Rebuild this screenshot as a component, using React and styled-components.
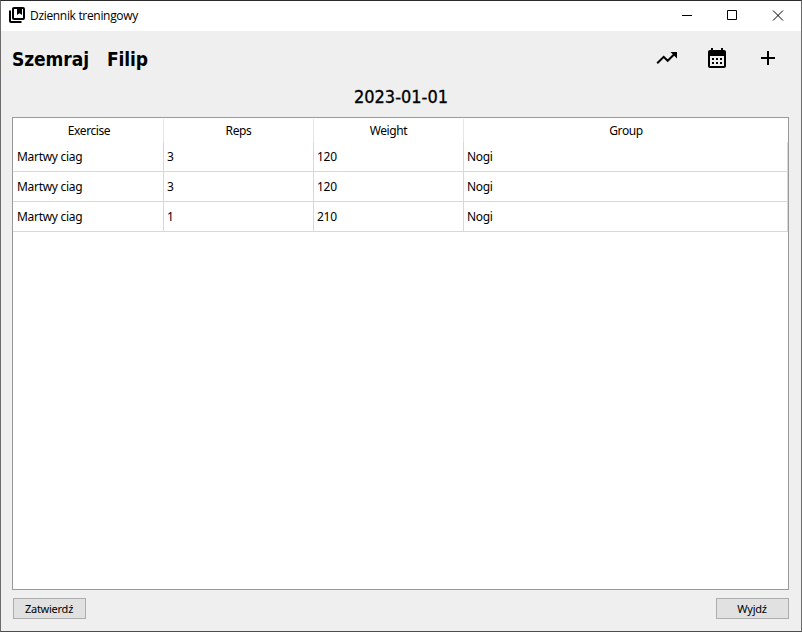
import React from "react";
import styled, { createGlobalStyle } from "styled-components";
import { MdCalendarMonth, MdAdd } from "react-icons/md";

const GlobalStyle = createGlobalStyle`
  * { box-sizing: border-box; }
  body { margin: 0; background: #efefef; overflow: hidden; }
`;

const Window = styled.div`
  display: flex;
  flex-direction: column;
  width: 802px;
  height: 632px;
  background: #efefef;
  border: 1px solid #6b6b6b;
  border-top-color: #2b2b2b;
  border-bottom-color: #4c4c4c;
  color: #000;
  font: 12px/16px "Noto Sans", "Open Sans", sans-serif;
  white-space: nowrap;
`;

const TitleBar = styled.header`
  display: flex;
  align-items: center;
  height: 30px;
  flex: none;
  padding-left: 8px;
  background: #fff;
`;

const AppIcon = styled.svg`
  width: 16px;
  height: 16px;
  margin: 0 5px 2px 0;
  fill: none;
  stroke: #000;
  stroke-width: 2;
`;

const WindowTitle = styled.span`
  flex: 1;
  font-family: "Open Sans", sans-serif;
  font-size: 12px;
  letter-spacing: -0.32px;
`;

const WindowButtons = styled.svg`
  width: 138px;
  height: 30px;
  fill: none;
  stroke: #000;
`;

const Toolbar = styled.div`
  display: flex;
  align-items: center;
  flex: none;
  height: 54px;
  padding: 0 21px 0 11px;
`;

const Name = styled.h1`
  margin: 2px 18px 0 0;
  font: bold 19px/24px "DejaVu Sans Condensed", "DejaVu Sans", sans-serif;
  font-stretch: semi-condensed;
  letter-spacing: -0.08px;
`;

const Actions = styled.div`
  display: flex;
  align-items: center;
  margin-left: auto;
  gap: 27px;

  svg { width: 24px; height: 24px; }
`;

const TrendIcon = styled.svg`
  margin-right: -1px;
  fill: none;
  stroke: #000;
  stroke-width: 2;
`;

const DateHeading = styled.h2`
  margin: 0;
  flex: none;
  height: 32px;
  text-align: center;
  font: 400 18px/23px "DejaVu Sans Condensed", "DejaVu Sans", sans-serif;
  font-stretch: semi-condensed;
  -webkit-text-stroke: 0.3px #000;
`;

const Table = styled.section`
  flex: 1;
  margin: 0 12px 0 11px;
  border: 1px solid #9a9a9a;
  background: #fff;
`;

const Row = styled.div`
  display: grid;
  grid-template-columns: 151px 150px 150px 1fr;
  height: 30px;
`;

const HeaderRow = styled(Row)`
  height: 24px;
  padding-top: 1px;
`;

const HeaderCell = styled.div`
  border-right: 1px solid #e5e5e5;
  text-align: center;
  line-height: 23px;
  letter-spacing: -0.4px;

  &:first-child { padding-left: 2px; }
  &:last-child { border-right: 0; }
`;

const Cell = styled.div`
  border-right: 1px solid #d8d8d8;
  border-bottom: 1px solid #d8d8d8;
  padding-top: 1px;
  padding-left: ${(p) => (p.$first ? "4px" : "3px")};
  line-height: 28px;
  letter-spacing: -0.3px;
`;

const Footer = styled.footer`
  display: flex;
  justify-content: space-between;
  flex: none;
  height: 41px;
  padding: 8px 12px 0;
`;

const Button = styled.button`
  width: 73px;
  height: 21px;
  padding: 0 1px 0 0;
  border: 1px solid #adadad;
  background: #e1e1e1;
  color: #000;
  font: 11px/19px "Noto Sans", sans-serif;
  letter-spacing: -0.25px;
`;

const headers = ["Exercise", "Reps", "Weight", "Group"];
const rows = [
  ["Martwy ciag", "3", "120", "Nogi"],
  ["Martwy ciag", "3", "120", "Nogi"],
  ["Martwy ciag", "1", "210", "Nogi"],
];

export default function App() {
  return (
    <>
      <GlobalStyle />
      <Window>
        <TitleBar>
          <AppIcon viewBox="0 0 16 16">
            <rect x="4" y="1" width="11" height="11" rx="1" />
            <path d="M1 3.5V14q0 1 1 1h10.5" />
            <path d="M8 1h5v7l-2.5-1.8L8 8z" fill="#000" stroke="none" />
          </AppIcon>
          <WindowTitle>Dziennik treningowy</WindowTitle>
          <WindowButtons viewBox="0 0 138 30">
            <path d="M19 14.5h10M64.5 9.5h9v9h-9zM110 9.5l10 10M120 9.5l-10 10" />
          </WindowButtons>
        </TitleBar>
        <Toolbar>
          <Name>Szemraj</Name>
          <Name>Filip</Name>
          <Actions>
            <TrendIcon viewBox="0 0 24 24">
              <path d="M2.2 17.3l6.5-6.5 4 4L20 7.5" />
              <path d="M15.5 6H22v6.5z" fill="#000" stroke="none" />
            </TrendIcon>
            <MdCalendarMonth />
            <MdAdd />
          </Actions>
        </Toolbar>
        <DateHeading>2023-01-01</DateHeading>
        <Table>
          <HeaderRow>
            {headers.map((h) => <HeaderCell key={h}>{h}</HeaderCell>)}
          </HeaderRow>
          {rows.map((row, i) => (
            <Row key={i}>
              {row.map((value, j) => <Cell key={j} $first={j === 0}>{value}</Cell>)}
            </Row>
          ))}
        </Table>
        <Footer>
          <Button>Zatwierdź</Button>
          <Button>Wyjdź</Button>
        </Footer>
      </Window>
    </>
  );
}
